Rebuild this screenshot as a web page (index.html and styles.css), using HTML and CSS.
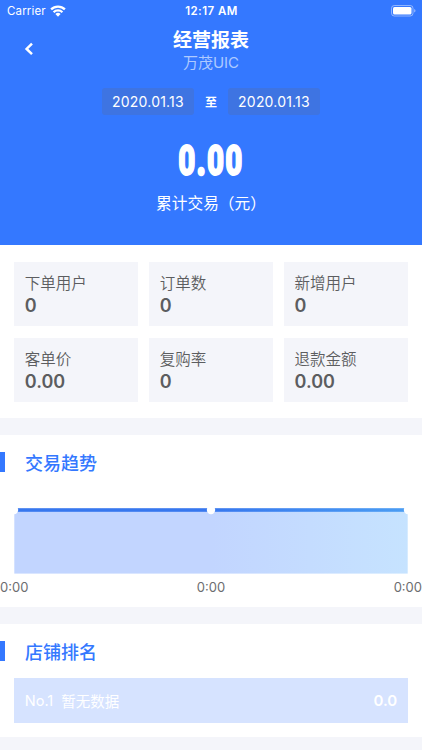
FILE: index.html
```
<!DOCTYPE html>
<html lang="zh-CN">
<head>
    <meta charset="UTF-8">
    <meta name="viewport" content="width=device-width, initial-scale=1.0">
    <title>经营报表</title>
    <link rel="stylesheet" href="styles.css">
</head>
<body>
    <header class="hero">
        <div class="status-bar">
            <div class="carrier">
                <span>Carrier</span>
                <svg class="wifi" width="16" height="12" viewBox="0 0 16 12" fill="none" stroke="#fff" stroke-width="2.3">
                    <path d="M1.1 4.4a9.8 9.8 0 0 1 13.8 0"/>
                    <path d="M3.6 7.2a6.2 6.2 0 0 1 8.8 0"/>
                    <path d="M5.4 9.1a3.7 3.7 0 0 1 5.2 0L8 11.7z" fill="#fff" stroke="none"/>
                </svg>
            </div>
            <div class="time">12:17 AM</div>
            <svg class="battery" width="25" height="12" viewBox="0 0 25 12">
                <rect x=".5" y=".5" width="21.5" height="10.5" rx="2.8" fill="none" stroke="#fff" stroke-opacity=".45"/>
                <rect x="2" y="2" width="18.5" height="7.5" rx="1.5" fill="#fff"/>
                <path d="M23.2 4v3.6q1.3-.6 1.3-1.8T23.2 4z" fill="#fff" fill-opacity=".5"/>
            </svg>
        </div>

        <div class="nav-bar">
            <svg class="back" width="10" height="14" viewBox="0 0 10 14" fill="none" stroke="#fff" stroke-width="2.5">
                <path d="M8 1.6 2.6 6.9 8 12.2"/>
            </svg>
            <div class="nav-title">
                <h1>经营报表</h1>
                <p>万茂UIC</p>
            </div>
        </div>

        <div class="date-range">
            <span class="date">2020.01.13</span>
            <span class="to">至</span>
            <span class="date">2020.01.13</span>
        </div>

        <div class="total">0<span class="dot">.</span>00</div>
        <div class="total-label">累计交易（元）</div>
    </header>

    <section class="stats-grid">
        <div class="stat-card"><h3>下单用户</h3><strong>0</strong></div>
        <div class="stat-card"><h3>订单数</h3><strong>0</strong></div>
        <div class="stat-card"><h3>新增用户</h3><strong>0</strong></div>
        <div class="stat-card"><h3>客单价</h3><strong>0.00</strong></div>
        <div class="stat-card"><h3>复购率</h3><strong>0</strong></div>
        <div class="stat-card"><h3>退款金额</h3><strong>0.00</strong></div>
    </section>

    <section class="trend">
        <h2 class="section-title">交易趋势</h2>
        <svg class="chart" width="422" height="70" viewBox="0 0 422 70">
            <defs>
                <linearGradient id="area" gradientUnits="userSpaceOnUse" x1="14" y1="0" x2="408" y2="0">
                    <stop offset="0" stop-color="#c2d5ff"/>
                    <stop offset=".5" stop-color="#c2d5ff"/>
                    <stop offset="1" stop-color="#c6e3ff"/>
                </linearGradient>
                <linearGradient id="line" gradientUnits="userSpaceOnUse" x1="14" y1="0" x2="408" y2="0">
                    <stop offset="0" stop-color="#3777ee"/>
                    <stop offset=".5" stop-color="#3777ee"/>
                    <stop offset="1" stop-color="#4b9df3"/>
                </linearGradient>
            </defs>
            <rect x="14.3" y="6" width="393.4" height="63.6" fill="url(#area)"/>
            <rect x="14.3" y="4.2" width="393.4" height="3.6" fill="url(#line)"/>
            <!-- data points -->
            <g fill="#fff">
                <circle cx="14" cy="6" r="4.2"/>
                <circle cx="211" cy="6" r="4.2"/>
                <circle cx="408" cy="6" r="4.2"/>
            </g>
        </svg>
        <div class="axis">
            <span>0:00</span>
            <span>0:00</span>
            <span>0:00</span>
        </div>
    </section>

    <section class="ranking">
        <h2 class="section-title">店铺排名</h2>
        <div class="rank-row">
            <span class="rank-no">No.1</span>
            <span class="rank-name">暂无数据</span>
            <span class="rank-value">0.0</span>
        </div>
    </section>
</body>
</html>
```
FILE: styles.css
```
* {
    margin: 0;
    padding: 0;
    box-sizing: border-box;
}

body {
    height: 750px;
    overflow: hidden;
    background: #f4f5fa;
    color: #5c5d60;
    font-family: Inter, 'Noto Sans CJK SC', sans-serif;
}

.hero {
    height: 245px;
    background: #3478ff;
    color: #fff;
    text-align: center;
}

.status-bar {
    display: grid;
    grid-template-columns: 1fr auto 1fr;
    align-items: center;
    height: 22px;
    padding: 0 6px 0 7px;
    font-size: 11.5px;
}

.carrier {
    display: flex;
    align-items: center;
    gap: 4px;
    letter-spacing: 0.15px;
}

.time {
    font-weight: 600;
    letter-spacing: 0.45px;
}

.battery {
    justify-self: end;
}

.nav-bar {
    display: grid;
    grid-template-columns: 60px 1fr 60px;
    align-items: center;
    height: 54px;
}

.back {
    margin-left: 23.5px;
}

.nav-title h1 {
    padding-top: 2px;
    font-size: 19px;
    font-weight: 700;
    line-height: 26px;
}

.nav-title p {
    font-size: 15px;
    line-height: 18px;
    color: #aecaff;
}

.date-range {
    display: flex;
    justify-content: center;
    align-items: center;
    gap: 11px;
    margin-top: 12px;
}

.date {
    width: 92px;
    height: 27px;
    border-radius: 3px;
    background: #3e74e2;
    font-size: 14px;
    line-height: 27px;
    letter-spacing: 0.2px;
}

.to {
    font-size: 12px;
    font-weight: 700;
}

/* condensed numerals */
.total {
    height: 44px;
    margin-top: 24px;
    font-family: Roboto, sans-serif;
    font-size: 42px;
    font-weight: 900;
    line-height: 44px;
    letter-spacing: 2px;
    transform: scaleX(0.7);
    -webkit-text-stroke: 1.8px #fff;
}

.total .dot {
    -webkit-text-stroke-width: 2.6px;
}

.total-label {
    margin-top: 10px;
    font-size: 15.7px;
    line-height: 22px;
}

.stats-grid {
    display: grid;
    grid-template-columns: repeat(3, 1fr);
    gap: 11.5px 11.2px;
    height: 173px;
    padding: 17px 14.3px 16.5px;
    background: #fff;
}

.stat-card {
    height: 64px;
    padding: 11px 10.5px 0;
    background: #f4f5fa;
}

.stat-card h3 {
    font-size: 15.5px;
    font-weight: 350;
    line-height: 22px;
}

.stat-card strong {
    display: block;
    font-size: 18px;
    font-weight: 600;
    line-height: 22px;
}

.trend,
.ranking {
    margin-top: 17px;
    padding-top: 17px;
    background: #fff;
}

.trend {
    height: 172px;
}

.ranking {
    height: 113px;
}

.section-title {
    height: 20px;
    padding-left: 20px;
    border-left: 5px solid #3478ff;
    color: #3478ff;
    font-size: 18px;
    font-weight: 500;
    line-height: 23px;
}

.chart {
    display: block;
    margin-top: 32px;
}

.axis {
    display: flex;
    justify-content: space-between;
    margin-top: 5px;
    color: #6c6d70;
    font-size: 13px;
    line-height: 17px;
}

.rank-row {
    display: flex;
    align-items: center;
    height: 45px;
    margin: 17px 14.3px 0;
    padding: 0 10.5px;
    background: #d6e3ff;
    color: #fff;
    font-size: 14.5px;
}

.rank-name {
    margin-left: 8px;
}

.rank-value {
    margin-left: auto;
    font-size: 15px;
    font-weight: 600;
}
```
